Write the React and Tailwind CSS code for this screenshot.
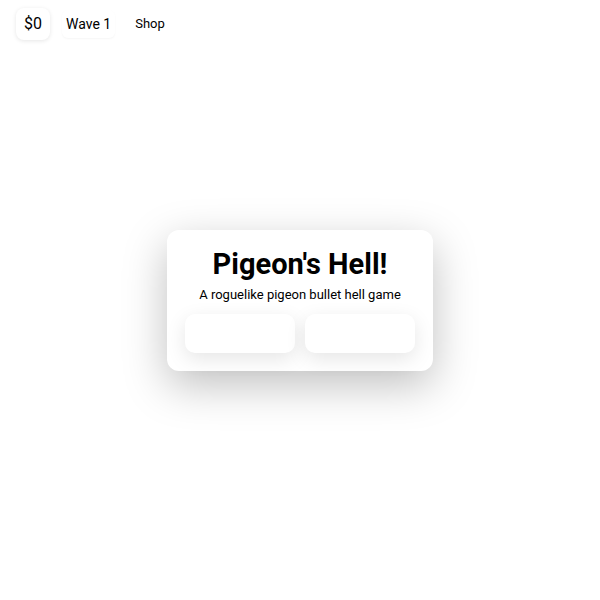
import { useState } from 'react'

const StatusBar = ({ money, wave, onShop }) => {
  return (
    <header className="flex items-center gap-3 px-4 py-2 text-black">
      <div className="rounded-lg bg-white px-2 py-1 text-base leading-6 shadow-[0_1px_4px_rgba(0,0,0,0.1)]">
        ${money}
      </div>
      <div className="rounded-md bg-white px-1 py-1 text-sm shadow-[0_1px_2px_rgba(0,0,0,0.04)]">
        Wave {wave}
      </div>
      <button
        type="button"
        className="rounded-md bg-white px-2 py-1 text-[13px] leading-5"
        onClick={onShop}
      >
        Shop
      </button>
    </header>
  )
}

const MenuButton = ({ label, onClick }) => {
  return (
    <button
      type="button"
      aria-label={label}
      className="h-[39px] flex-1 rounded-[10px] bg-white shadow-[0_6px_20px_rgba(0,0,0,0.1)]"
      onClick={onClick}
    />
  )
}

const MainMenu = ({ onPlay, onSettings }) => {
  return (
    <main className="flex flex-col items-center rounded-xl bg-white p-[18px] pt-4 text-black shadow-[0_14px_44px_rgba(0,0,0,0.25)]">
      <h1 className="text-[29px] leading-9 font-bold">Pigeon's Hell!</h1>
      <p className="mt-[3px] px-[14px] text-[13px] leading-5">
        A roguelike pigeon bullet hell game
      </p>
      <div className="mt-[9px] flex gap-[10px] self-stretch">
        <MenuButton label="Play" onClick={onPlay} />
        <MenuButton label="Settings" onClick={onSettings} />
      </div>
    </main>
  )
}

export default function App() {
  const [, setScreen] = useState('menu')

  return (
    <div className="relative min-h-screen bg-white font-[Roboto,sans-serif]">
      <StatusBar money={0} wave={1} onShop={() => setScreen('shop')} />
      <div className="pointer-events-none absolute inset-0 flex items-center justify-center">
        <div className="pointer-events-auto">
          <MainMenu
            onPlay={() => setScreen('game')}
            onSettings={() => setScreen('settings')}
          />
        </div>
      </div>
    </div>
  )
}
